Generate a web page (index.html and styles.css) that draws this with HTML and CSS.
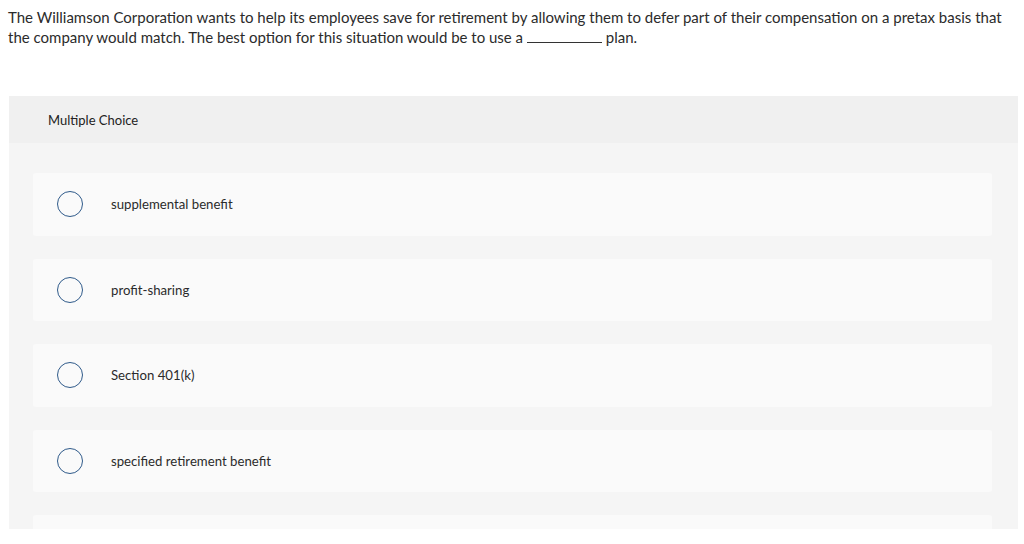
FILE: index.html
```html
<!DOCTYPE html>
<html>
<head>
<meta charset="utf-8">
<link rel="stylesheet" href="styles.css">
</head>
<body>
<p class="question">The Williamson Corporation wants to help its employees save for retirement by allowing them to defer part of their compensation on a pretax basis that the company would match. The best option for this situation would be to use a <span class="blank"></span> plan.</p>
<section class="panel">
  <header class="panel-head">Multiple Choice</header>
  <div class="options">
    <div class="option"><span class="radio"></span><span class="label">supplemental benefit</span></div>
    <div class="option"><span class="radio"></span><span class="label">profit-sharing</span></div>
    <div class="option"><span class="radio"></span><span class="label">Section 401(k)</span></div>
    <div class="option"><span class="radio"></span><span class="label">specified retirement benefit</span></div>
    <div class="option"></div>
  </div>
</section>
</body>
</html>
```

FILE: styles.css
```css
html, body {
  margin: 0;
  padding: 0;
  background: #ffffff;
}
body {
  padding: 0 6px 0 8px;
  font-family: "Lato", "Open Sans", sans-serif;
  color: #2b2b2b;
}
.question {
  margin: 7px 0 0 0;
  font-size: 15px;
  line-height: 20px;
}
.blank {
  display: inline-block;
  width: 75px;
  height: 0;
  border-bottom: 1px solid #333;
  vertical-align: baseline;
}
.panel {
  margin-top: 49px;
  margin-left: 1px;
  width: 1009px;
  height: 433px;
  overflow: hidden;
  background: #f5f5f5;
}
.panel-head {
  background: #f0f0f0;
  height: 47px;
  padding-left: 39px;
  display: flex;
  align-items: center;
  font-size: 13px;
  color: #222;
}
.options {
  display: flex;
  flex-direction: column;
  gap: 23px;
  padding: 30px 26px 0 24px;
}
.option {
  background: #fafafa;
  border-radius: 3px;
  height: 62.5px;
  display: flex;
  align-items: center;
  padding-left: 24px;
  flex-shrink: 0;
}
.radio {
  width: 24px;
  height: 24px;
  border: 1.2px solid #2f5a8a;
  border-radius: 50%;
  flex-shrink: 0;
}
.label {
  margin-left: 28px;
  font-size: 13.2px;
  color: #2b2b2b;
}
```
